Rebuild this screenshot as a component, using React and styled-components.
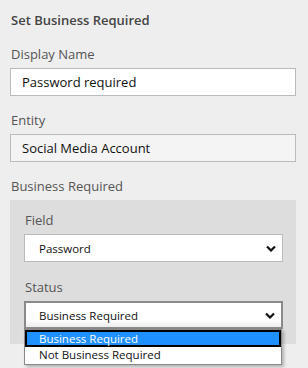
import React from 'react';
import styled, { createGlobalStyle } from 'styled-components';

const GlobalStyle = createGlobalStyle`
  html, body {
    margin: 0;
    padding: 0;
    background: #eeeeee;
  }
  body {
    font-family: "Open Sans", "Noto Sans", sans-serif;
    color: #333;
  }
`;

const Styles = {
  Page: styled.div`
    box-sizing: border-box;
    width: 308px;
    min-height: 368px;
    padding: 10px 12px 0 10px;
  `,
  Title: styled.div`
    font-size: 13px;
    font-weight: 600;
    color: #444;
    line-height: 20px;
    margin-left: 1px;
  `,
  Label: styled.div`
    font-size: 13px;
    color: #555;
    line-height: 20px;
    margin: ${({ top }) => top}px 0 4px 1px;
  `,
  Input: styled.div`
    box-sizing: border-box;
    height: 28px;
    border: 1px solid #bbbbbb;
    background: ${({ readOnly }) => (readOnly ? '#f4f4f4' : '#ffffff')};
    padding: 0 11px;
    font-size: 13px;
    line-height: 26px;
    color: #111;
  `,
  Panel: styled.div`
    margin-top: 3px;
    background: #dddddd;
    padding: 10px 13px 15px 14px;
  `,
  SelectWrap: styled.div`
    position: relative;
  `,
  Select: styled.div`
    box-sizing: border-box;
    height: 28px;
    display: flex;
    align-items: center;
    justify-content: space-between;
    padding: 0 6px 0 14px;
    background: ${({ focused }) => (focused ? 'linear-gradient(#ffffff 70%, #ececec)' : '#ffffff')};
    border: ${({ focused }) => (focused ? '2px solid #8a8a8a' : '1px solid #bbbbbb')};
    padding-left: ${({ focused }) => (focused ? '13px' : '14px')};
    font-size: 11.5px;
    color: #111;
  `,
  Menu: styled.div`
    position: absolute;
    top: 100%;
    left: 0;
    z-index: 2;
    width: 258px;
    box-sizing: border-box;
    border: 1px solid #8a8a8a;
    background: #ffffff;
    box-shadow: 2px 2px 3px rgba(0, 0, 0, 0.25);
  `,
  Option: styled.div`
    box-sizing: border-box;
    height: 17px;
    line-height: ${({ selected }) => (selected ? '13px' : '16px')};
    padding-left: ${({ selected }) => (selected ? '12px' : '14px')};
    font-size: 11.5px;
    color: ${({ selected }) => (selected ? '#ffffff' : '#111')};
    background: ${({ selected }) => (selected ? '#1e90ff' : 'transparent')};
    border: ${({ selected }) => (selected ? '2px solid #000' : 'none')};
  `,
};

const Chevron = () => (
  <svg width="10" height="7" viewBox="0 0 10 7">
    <path d="M1 1.5 L5 5.5 L9 1.5" fill="none" stroke="#111" strokeWidth="2.2" />
  </svg>
);

const App = () => (
  <>
    <GlobalStyle />
    <Styles.Page>
      <Styles.Title>Set Business Required</Styles.Title>
      <Styles.Label top={14}>Display Name</Styles.Label>
      <Styles.Input>Password required</Styles.Input>
      <Styles.Label top={14}>Entity</Styles.Label>
      <Styles.Input readOnly>Social Media Account</Styles.Input>
      <Styles.Label top={14}>Business Required</Styles.Label>
      <Styles.Panel>
        <Styles.Label top={0}>Field</Styles.Label>
        <Styles.Select>
          Password
          <Chevron />
        </Styles.Select>
        <Styles.Label top={15}>Status</Styles.Label>
        <Styles.SelectWrap>
          <Styles.Select focused>
            Business Required
            <Chevron />
          </Styles.Select>
          <Styles.Menu>
            <Styles.Option selected>Business Required</Styles.Option>
            <Styles.Option>Not Business Required</Styles.Option>
          </Styles.Menu>
        </Styles.SelectWrap>
      </Styles.Panel>
    </Styles.Page>
  </>
);

export default App;
